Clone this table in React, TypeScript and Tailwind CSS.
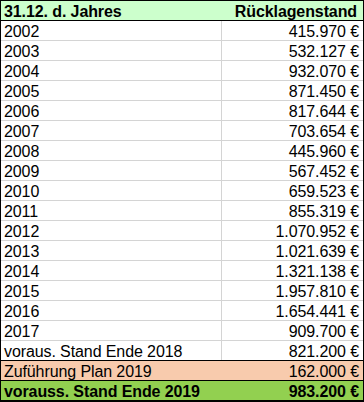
const rows: [string, string][] = [
  ["2002", "415.970 €"],
  ["2003", "532.127 €"],
  ["2004", "932.070 €"],
  ["2005", "871.450 €"],
  ["2006", "817.644 €"],
  ["2007", "703.654 €"],
  ["2008", "445.960 €"],
  ["2009", "567.452 €"],
  ["2010", "659.523 €"],
  ["2011", "855.319 €"],
  ["2012", "1.070.952 €"],
  ["2013", "1.021.639 €"],
  ["2014", "1.321.138 €"],
  ["2015", "1.957.810 €"],
  ["2016", "1.654.441 €"],
  ["2017", "909.700 €"],
];

export default function App() {
  return (
    <div className="w-[364px] h-[402px] bg-white font-['Liberation_Sans',Arial,sans-serif] text-[16px] text-black tracking-[-0.1px]">
      <div className="border border-black border-b-2">
        {/* header */}
        <div className="flex h-[20px] bg-[#ccffcc] border-b border-black font-bold leading-[21px]">
          <div className="w-[221px] pl-[3px]">31.12. d. Jahres</div>
          <div className="flex-1 text-right pr-[6px]">Rücklagenstand</div>
        </div>

        {rows.map(([year, amount]) => (
          <div key={year} className="flex h-[20px] border-b border-[#d4d4d4] leading-[21px]">
            <div className="w-[221px] pl-[3px] border-r border-[#d4d4d4]">{year}</div>
            <div className="flex-1 text-right pr-[4px]">{amount}</div>
          </div>
        ))}

        <div className="flex h-[20px] border-b border-black leading-[21px]">
          <div className="w-[221px] pl-[3px] border-r border-[#d4d4d4] whitespace-nowrap">voraus. Stand Ende 2018</div>
          <div className="flex-1 text-right pr-[4px]">821.200 €</div>
        </div>

        <div className="flex h-[20px] bg-[#f8cbad] border-b border-black leading-[21px]">
          <div className="w-[221px] pl-[3px]">Zuführung Plan 2019</div>
          <div className="flex-1 text-right pr-[4px]">162.000 €</div>
        </div>

        <div className="flex h-[19px] bg-[#92d050] font-bold leading-[21px]">
          <div className="w-[221px] pl-[3px] whitespace-nowrap">vorauss. Stand Ende 2019</div>
          <div className="flex-1 text-right pr-[4px]">983.200 €</div>
        </div>
      </div>
    </div>
  );
}
